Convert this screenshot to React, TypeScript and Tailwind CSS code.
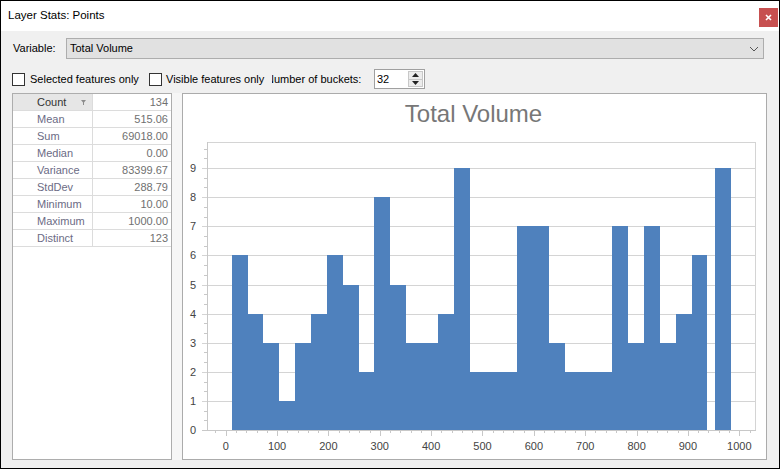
import React from "react";

const bars: [number, number, number][] = [
  [232, 248, 6], [248, 263, 4], [263, 279, 3], [279, 295, 1], [295, 311, 3], [311, 327, 4],
  [327, 343, 6], [343, 359, 5], [359, 374, 2], [374, 390, 8], [390, 406, 5], [406, 438, 3],
  [438, 454, 4], [454, 470, 9], [470, 517, 2], [517, 549, 7], [549, 565, 3], [565, 612, 2],
  [612, 628, 7], [628, 644, 3], [644, 660, 7], [660, 676, 3], [676, 692, 4], [692, 707, 6],
  [715, 731, 9],
];

const Y0 = 430;
const UNIT = 29.1;
const yv = (v: number) => Y0 - UNIT * v;
const xv = (v: number) => 225.7 + 0.5136 * v;

const stats: [string, string][] = [
  ["Mean", "515.06"],
  ["Sum", "69018.00"],
  ["Median", "0.00"],
  ["Variance", "83399.67"],
  ["StdDev", "288.79"],
  ["Minimum", "10.00"],
  ["Maximum", "1000.00"],
  ["Distinct", "123"],
];

function Chart() {
  const grid = "#d4d4d4";
  const ints = [0, 1, 2, 3, 4, 5, 6, 7, 8, 9];
  const minorY: number[] = [];
  for (let v = 0; v <= 9; v++) {
    for (const f of [1 / 3, 2 / 3]) {
      if (v + f < 9.9) minorY.push(v + f);
    }
  }
  const majorX: number[] = [];
  for (let v = 0; v <= 1000; v += 100) majorX.push(v);
  const minorX: number[] = [];
  for (let v = -20; v <= 1020; v += 20) if (v % 100 !== 0) minorX.push(v);
  return (
    <svg
      width={583}
      height={365}
      viewBox="183 94 583 365"
      className="block"
      shapeRendering="crispEdges"
    >
      <text
        x={473.5}
        y={122}
        textAnchor="middle"
        fontSize={24}
        fill="#777777"
        fontFamily="'Liberation Sans', Arial, sans-serif"
        shapeRendering="auto"
      >
        Total Volume
      </text>
      {/* gridlines */}
      {ints.slice(1).map((v) => (
        <line key={"g" + v} x1={202} x2={755} y1={Math.round(yv(v)) + 0.5} y2={Math.round(yv(v)) + 0.5} stroke={grid} />
      ))}
      <line x1={207} x2={756} y1={142.5} y2={142.5} stroke={grid} />
      <line x1={755.5} x2={755.5} y1={142} y2={431} stroke={grid} />
      <line x1={207.5} x2={207.5} y1={142} y2={431} stroke="#c8c8c8" />
      <line x1={202} x2={756} y1={430.5} y2={430.5} stroke="#c8c8c8" />
      {minorY.map((v, i) => (
        <line key={"my" + i} x1={204} x2={207} y1={Math.round(yv(v)) + 0.5} y2={Math.round(yv(v)) + 0.5} stroke="#c8c8c8" />
      ))}
      {majorX.map((v) => (
        <line key={"mx" + v} x1={Math.round(xv(v)) + 0.5} x2={Math.round(xv(v)) + 0.5} y1={430} y2={436} stroke="#c8c8c8" />
      ))}
      {minorX.map((v) => (
        <line key={"nx" + v} x1={Math.round(xv(v)) + 0.5} x2={Math.round(xv(v)) + 0.5} y1={430} y2={433} stroke="#c8c8c8" />
      ))}
      {bars.map(([a, b, v], i) => (
        <rect key={"b" + i} x={a} y={Math.round(yv(v))} width={b - a} height={Y0 - Math.round(yv(v))} fill="#4f81bd" />
      ))}
      <g fontFamily="'Liberation Sans', Arial, sans-serif" fontSize={11} fill="#444444" shapeRendering="auto">
        {ints.map((v) => (
          <text key={"yl" + v} x={196} y={Math.round(yv(v)) + 4} textAnchor="end">
            {v}
          </text>
        ))}
        {majorX.map((v) => (
          <text key={"xl" + v} x={xv(v)} y={450} textAnchor="middle">
            {v}
          </text>
        ))}
      </g>
    </svg>
  );
}

function Checkbox() {
  return <div className="w-[13px] h-[13px] border border-[#333333] bg-white shrink-0" />;
}

export default function App() {
  return (
    <div className="w-[780px] h-[469px] border border-black bg-[#f0f0f0] flex flex-col overflow-hidden font-['Liberation_Sans',Arial,sans-serif] text-[11px] text-black">
      {/* title bar */}
      <div className="h-[30px] bg-white flex justify-between shrink-0">
        <div className="pl-[7px] flex items-center text-[11.5px]">Layer Stats: Points</div>
        <div className="mt-[7px] mr-[1px] w-[19px] h-[19px] bg-[#c75050] flex items-center justify-center">
          <svg width="7" height="7" viewBox="0 0 7 7">
            <path d="M1 1 L6 6 M6 1 L1 6" stroke="white" strokeWidth="1.6" />
          </svg>
        </div>
      </div>
      {/* body */}
      <div className="flex-1 flex flex-col pt-[7px] px-[11px] pb-[8px] min-h-0">
        <div className="h-[21px] flex items-center shrink-0">
          <div className="w-[54px] pl-[1px]">Variable:</div>
          <div className="w-[698px] h-[21px] border border-[#adadad] bg-[#e1e1e1] flex items-center justify-between pl-[3px] pr-[4px]">
            <span>Total Volume</span>
            <svg width="10" height="6" viewBox="0 0 10 6">
              <path d="M1 1 L5 5 L9 1" stroke="#555555" strokeWidth="1" fill="none" />
            </svg>
          </div>
        </div>
        <div className="mt-[10px] h-[20px] flex items-center shrink-0">
          <div className="w-[137px] flex items-center gap-[5px]">
            <Checkbox />
            <span>Selected features only</span>
          </div>
          <div className="w-[123px] flex items-center gap-[4px]">
            <Checkbox />
            <span className="whitespace-nowrap">Visible features only</span>
          </div>
          <div className="w-[102px] overflow-hidden whitespace-nowrap">
            <span className="block -ml-[6px]">Number of buckets:</span>
          </div>
          <div className="w-[51px] h-[20px] border border-[#a0a0a0] bg-white flex items-center justify-between pl-[2px] pr-[1px]">
            <span>32</span>
            <div className="w-[15px] h-[16px] flex flex-col border border-[#c8c8c8] bg-[#ececec]">
              <div className="flex-1 flex items-center justify-center border-b border-[#c8c8c8]">
                <svg width="7" height="4" viewBox="0 0 7 4">
                  <path d="M0 4 L3.5 0 L7 4 Z" fill="#222222" />
                </svg>
              </div>
              <div className="flex-1 flex items-center justify-center">
                <svg width="7" height="4" viewBox="0 0 7 4">
                  <path d="M0 0 L3.5 4 L7 0 Z" fill="#222222" />
                </svg>
              </div>
            </div>
          </div>
        </div>
        <div className="mt-[4px] flex-1 flex mr-[1px] min-h-0">
          {/* stats table */}
          <div className="w-[160px] border border-[#adadad] bg-white flex flex-col">
            <div className="h-[17px] flex border-b border-[#dcdcdc]">
              <div className="w-[80px] bg-[#e6e6e6] border-r border-[#dcdcdc] flex items-center pl-[24px] pr-[6px] justify-between text-[#333333]">
                <span>Count</span>
                <svg width="5" height="5" viewBox="0 0 5 5">
                  <path d="M0 0 H5 L3 2.5 V5 H2 V2.5 Z" fill="#8c8c8c" />
                </svg>
              </div>
              <div className="flex-1 flex items-center justify-end pr-[3px] text-[#707070]">134</div>
            </div>
            {stats.map(([k, v]) => (
              <div key={k} className="h-[17px] flex border-b border-[#dcdcdc]">
                <div className="w-[80px] border-r border-[#dcdcdc] flex items-center pl-[24px] text-[#6b6b85]">{k}</div>
                <div className="flex-1 flex items-center justify-end pr-[3px] text-[#707070]">{v}</div>
              </div>
            ))}
          </div>
          <div className="w-[10px] bg-[#f6f6f6]" />
          {/* chart */}
          <div className="flex-1 border border-[#ababab] bg-white overflow-hidden">
            <Chart />
          </div>
        </div>
      </div>
    </div>
  );
}
